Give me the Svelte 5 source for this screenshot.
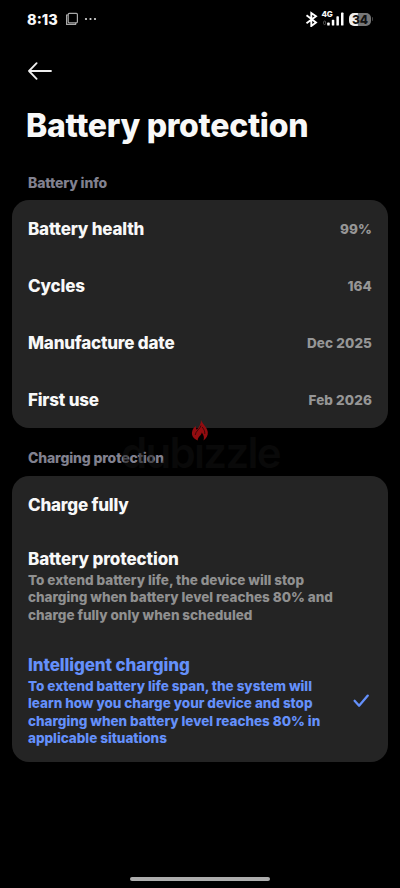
<script lang="ts">
	const info = [
		{ label: "Battery health", value: "99%" },
		{ label: "Cycles", value: "164" },
		{ label: "Manufacture date", value: "Dec 2025" },
		{ label: "First use", value: "Feb 2026" },
	];

	const modes = [
		{ id: "full", title: "Charge fully", lines: [] },
		{
			id: "protect",
			title: "Battery protection",
			lines: [
				"To extend battery life, the device will stop",
				"charging when battery level reaches 80% and",
				"charge fully only when scheduled",
			],
		},
		{
			id: "smart",
			title: "Intelligent charging",
			lines: [
				"To extend battery life span, the system will",
				"learn how you charge your device and stop",
				"charging when battery level reaches 80% in",
				"applicable situations",
			],
		},
	];

	let selected = $state("smart");
</script>

<div class="screen">
	<div class="status-bar">
		<div class="status-left">
			<span class="clock">8:13</span>
			<svg class="copy" width="14" height="14" viewBox="0 0 14 14" fill="none" stroke="#a9a9a9" stroke-width="1.2">
				<rect x="3.2" y="1.4" width="9.2" height="9.4" rx="1" />
				<path d="M3.2 3H1.6v9.3h9V10.8" />
			</svg>
			<svg width="14" height="4" viewBox="0 0 14 4" fill="#ddd">
				<circle cx="2" cy="2" r="1.1" />
				<circle cx="6.5" cy="2" r="1.1" />
				<circle cx="11" cy="2" r="1.1" />
			</svg>
		</div>
		<div class="status-right">
			<svg width="14" height="16" viewBox="0 0 14 16" fill="none" stroke="#fff" stroke-width="1.9">
				<path d="M1.500 4.300l9.500 7.100L6.300 15V2L11 5.200l-9.500 7.100" />
			</svg>
			<div class="signal">
				<span class="network">4G</span>
				<svg width="24" height="16" viewBox="0 0 24 16" fill="#fff">
					<rect x="0.6" y="10" width="2" height="3.6" rx="1" fill="none" stroke="#666" stroke-width="0.8" />
					<rect x="4.2" y="11.6" width="2.5" height="3" rx="0.7" />
					<rect x="8.8" y="8.8" width="2.5" height="5.8" rx="0.7" />
					<rect x="13.4" y="5.2" width="2.5" height="9.4" rx="0.7" />
					<rect x="18" y="1.6" width="2.5" height="13" rx="0.7" />
				</svg>
			</div>
			<div class="battery"><span>34</span></div>
		</div>
	</div>

	<header>
		<button class="back" aria-label="Back">
			<svg width="26" height="18" viewBox="0 0 26 18" fill="none" stroke="#eee" stroke-width="1.8" stroke-linecap="round" stroke-linejoin="round">
				<path d="M24 9H2M9.6 1.2L2 9l7.6 7.8" />
			</svg>
		</button>
		<h1>Battery protection</h1>
	</header>

	<h2 class="info-heading">Battery info</h2>
	<section class="card">
		{#each info as row}
			<div class="info-row">
				<span class="label">{row.label}</span>
				<span class="value">{row.value}</span>
			</div>
		{/each}
	</section>

	<h2 class="charging-heading">Charging protection</h2>
	<section class="card">
		{#each modes as mode (mode.id)}
			<button class="mode mode-{mode.id}" class:active={selected === mode.id} onclick={() => (selected = mode.id)}>
				<span class="mode-text">
					<span class="label">{mode.title}</span>
					{#each mode.lines as line}
						<span class="desc">{line}</span>
					{/each}
				</span>
				{#if selected === mode.id}
					<svg class="check" width="18" height="16" viewBox="0 0 18 16" fill="none" stroke="#6490fb" stroke-width="2.3" stroke-linecap="round" stroke-linejoin="round">
						<path d="M2.6 7.8l4.5 4.9L15.800 2.600" />
					</svg>
				{/if}
			</button>
		{/each}
	</section>

	<div class="watermark">
		<svg width="18" height="23" viewBox="0 0 18 22">
			<path d="M10 0c.5 4 6 7 6.8 12.500.4 3.500-1.500 6.500-4.300 8.500 1-3 .2-5.500-1.700-8-.4 3-3.600 3.700-4.200 8C3 19.500.5 16.800 1 12.800 1.400 10 3 8 4.800 6.600c0 2 .3 3 1 3.700C8.500 7.500 10.200 4 10 0z" fill="#930c10" />
			<path d="M10 6c-.2 3-5.6 5.5-5.8 9.500M11.200 7.500c1.800 2.500 2.800 4 2.600 7" fill="none" stroke="#3d0808" />
		</svg>
		<span>dubızzle</span>
	</div>

	<div class="home-bar"></div>
</div>

<style>
	:global(body) {
		background: #000;
	}

	.screen {
		position: relative;
		display: flex;
		flex-direction: column;
		box-sizing: border-box;
		width: 400px;
		height: 888px;
		padding: 0 12px;
		overflow: hidden;
		background: #000;
		color: #f8f8f8;
		font-family: Inter, "Liberation Sans", sans-serif;
	}

	button {
		padding: 0;
		border: 0;
		background: none;
		color: inherit;
		font: inherit;
		text-align: left;
	}

	/* Status bar */
	.status-bar {
		display: flex;
		justify-content: space-between;
		align-items: center;
		height: 38px;
		padding: 0 15px;
	}

	.status-left,
	.status-right {
		display: flex;
		align-items: center;
	}

	.clock {
		width: 37.5px;
		font-size: 14.5px;
		font-weight: 800;
	}

	.copy {
		margin-right: 5.5px;
	}

	.signal {
		position: relative;
		height: 16px;
		margin: 0 2px 0 4px;
	}

	.network {
		position: absolute;
		top: -1px;
		left: -1.5px;
		font-size: 8px;
		font-weight: 800;
		line-height: 8px;
		letter-spacing: -0.3px;
	}

	.battery {
		position: relative;
		width: 22px;
		height: 13px;
		margin-right: 2px;
		border-radius: 5px;
		background: linear-gradient(90deg, #eee 38%, #777 42%);
		color: #111;
		font-size: 12px;
		font-weight: 800;
		line-height: 13px;
		text-align: center;
	}

	.battery::after {
		content: "";
		position: absolute;
		top: 4.5px;
		right: -2px;
		width: 1.5px;
		height: 4px;
		border-radius: 0 2px 2px 0;
		background: #444;
	}

	/* Headings */
	.back {
		display: block;
		height: 18px;
		margin: 24px 0 0 15px;
	}

	.back svg {
		display: block;
	}

	h1 {
		margin: 25px 0 0 14px;
		font-size: 32px;
		font-weight: 800;
		line-height: 42px;
		letter-spacing: -0.28px;
	}

	h2 {
		margin: 0 16px;
		color: #81818f;
		font-size: 14px;
		font-weight: 800;
		line-height: 18px;
		letter-spacing: -0.15px;
	}

	.info-heading {
		padding: 27px 0 8px;
	}

	.charging-heading {
		padding: 21px 0 9px;
	}

	/* Cards */
	.card {
		border-radius: 17px;
		background: #242424;
	}

	.info-row {
		display: flex;
		justify-content: space-between;
		align-items: center;
		height: 57px;
		padding: 0 16px;
	}

	.label {
		font-size: 17px;
		font-weight: 800;
		line-height: 22px;
		letter-spacing: -0.2px;
	}

	.value {
		color: #969696;
		font-size: 13.5px;
		font-weight: 800;
		letter-spacing: 0.1px;
	}

	.mode {
		display: flex;
		justify-content: space-between;
		align-items: center;
		width: 100%;
		padding: 0 18px 0 16px;
	}

	.mode-full {
		height: 57px;
	}

	.mode-protect {
		height: 106px;
	}

	.mode-smart {
		height: 123px;
	}

	.mode-text {
		display: flex;
		flex-direction: column;
	}

	.mode-protect .label,
	.mode-smart .label {
		padding-bottom: 2px;
		letter-spacing: -0.1px;
	}

	.desc {
		color: #909090;
		font-size: 13.5px;
		font-weight: 800;
		line-height: 17.4px;
		letter-spacing: -0.02px;
		white-space: nowrap;
	}

	.active .label,
	.active .desc {
		color: #6490fb;
	}

	/* Overlays */
	.watermark {
		position: absolute;
		top: 420px;
		left: 121px;
		color: rgb(18 18 18 / 50%);
		font-size: 42px;
		font-weight: 600;
		line-height: 66px;
		letter-spacing: -1.7px;
		pointer-events: none;
	}

	.watermark svg {
		position: absolute;
		top: -1px;
		left: 70px;
	}

	.home-bar {
		position: absolute;
		bottom: 7px;
		left: 130px;
		width: 140px;
		height: 4px;
		border-radius: 2px;
		background: #adadad;
	}
</style>
